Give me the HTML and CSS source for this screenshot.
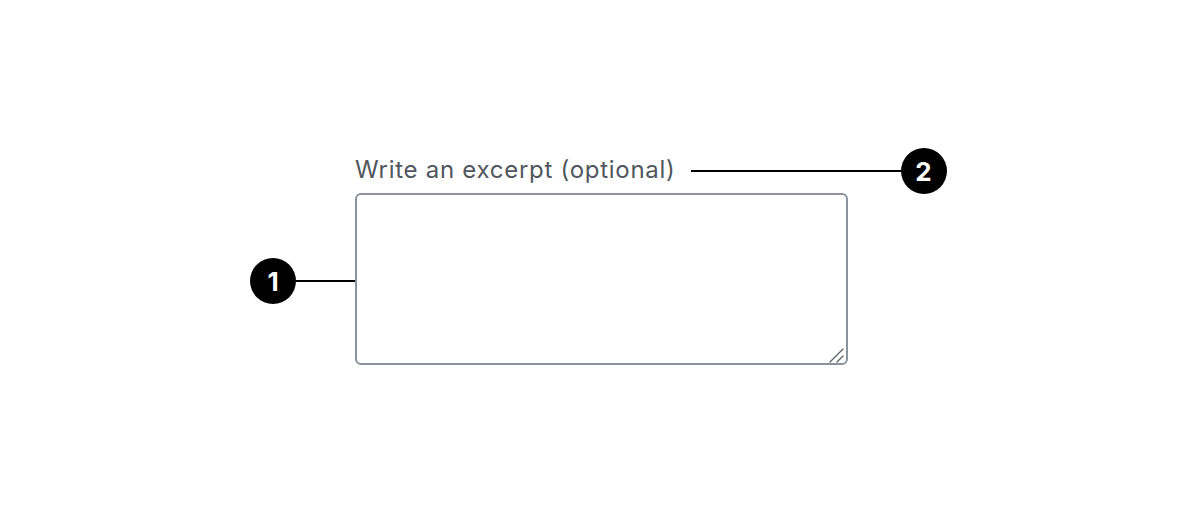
FILE: index.html
```html
<!DOCTYPE html>
<html lang="en">
<head>
  <meta charset="UTF-8" />
  <title>Excerpt field</title>
  <link rel="stylesheet" href="styles.css">
</head>
<body>
  <div class="annot">
    <div class="label-row">
      <label class="field-label" for="excerpt">Write an excerpt (optional)</label>
      <span class="connector long"></span>
      <span class="badge">2</span>
    </div>
    <div class="field-row">
      <span class="badge">1</span>
      <span class="connector short"></span>
      <div class="field-wrap">
        <textarea id="excerpt" class="excerpt"></textarea>
        <svg class="grip" width="18" height="18" viewBox="0 0 18 18">
          <path d="M2 17 L15 4 M9 17 L15 11" stroke="#5f656c" stroke-width="1.4" stroke-linecap="round" fill="none"/>
        </svg>
      </div>
    </div>
  </div>
</body>
</html>
```

FILE: styles.css
```css
* { box-sizing: border-box; }

body {
  margin: 0;
  background: #fff;
  font-family: Inter, "Noto Sans", sans-serif;
}

.annot {
  padding: 148px 0 0 250px;
}

.label-row {
  display: flex;
  align-items: center;
  height: 46px;
  padding-left: 105px;
}

.field-label {
  font-size: 24px;
  color: #50575e;
  letter-spacing: 0.72px;
  margin-top: -3px;
}

.connector {
  height: 2px;
  background: #000;
}

.connector.long {
  width: 210px;
  margin-left: 15px;
}

.connector.short {
  width: 59px;
}

.badge {
  width: 46px;
  height: 46px;
  border-radius: 50%;
  background: #000;
  color: #fff;
  font-weight: 700;
  font-size: 26px;
  display: flex;
  align-items: center;
  justify-content: center;
  flex-shrink: 0;
}

.field-row {
  display: flex;
  align-items: center;
  margin-top: -1px;
}

.field-row .badge,
.field-row .connector {
  margin-top: 4px;
}

.field-wrap {
  position: relative;
  width: 493px;
  height: 172px;
}

.excerpt {
  display: block;
  width: 100%;
  height: 100%;
  border: 2px solid #8a929c;
  border-radius: 6px;
  resize: none;
  margin: 0;
  font-family: inherit;
}

.grip {
  position: absolute;
  right: 2px;
  bottom: 2px;
}
```
